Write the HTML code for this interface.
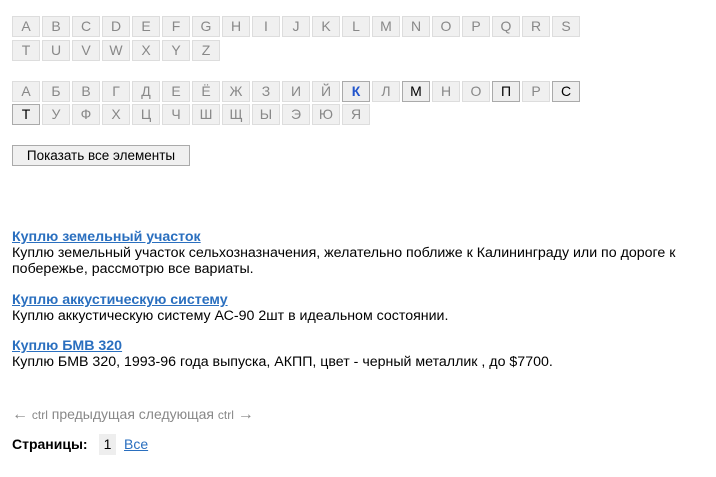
<!DOCTYPE html>
<html><head><meta charset="utf-8"><style>
body{margin:0;background:#fff;font-family:"Liberation Sans",Arial,sans-serif;font-size:14px;color:#000;width:716px;height:477px;position:relative;overflow:hidden}
.row{position:absolute;left:12px;display:flex}
.c{width:26px;height:19px;border:1px solid #ddd;background:#f0f0f0;color:#888;margin-right:2px;text-align:center;line-height:19px;font-size:14px}
.a{border-color:#aaa;background:#eee;color:#000}
.k{color:#2255cc;font-weight:bold}
.btn{position:absolute;left:12px;top:145px;width:176px;height:19px;border:1px solid #aaa;background:#f0f0f0;text-align:center;line-height:19px;font-size:13.5px}
.t{position:absolute;left:12px;line-height:16px;font-size:14.2px}
.t a{color:#2a6fbf;font-weight:bold;text-decoration:underline}
.nav{position:absolute;left:12px;top:406px;color:#888;font-size:14px}
.nav small{font-size:12px}
.nav b{font-weight:normal;font-size:16px}
.pg{position:absolute;left:12px;top:434px;font-weight:bold;line-height:20px}
.one{position:absolute;left:99px;top:434px;width:17px;height:21px;background:#eee;text-align:center;line-height:20px}
.all{position:absolute;left:124px;top:434px;line-height:20px;color:#2a6fbf;text-decoration:underline}
</style></head><body>
<div class="row" style="top:16px"><div class="c">A</div><div class="c">B</div><div class="c">C</div><div class="c">D</div><div class="c">E</div><div class="c">F</div><div class="c">G</div><div class="c">H</div><div class="c">I</div><div class="c">J</div><div class="c">K</div><div class="c">L</div><div class="c">M</div><div class="c">N</div><div class="c">O</div><div class="c">P</div><div class="c">Q</div><div class="c">R</div><div class="c">S</div></div>
<div class="row" style="top:40px"><div class="c">T</div><div class="c">U</div><div class="c">V</div><div class="c">W</div><div class="c">X</div><div class="c">Y</div><div class="c">Z</div></div>
<div class="row" style="top:81px"><div class="c">А</div><div class="c">Б</div><div class="c">В</div><div class="c">Г</div><div class="c">Д</div><div class="c">Е</div><div class="c">Ё</div><div class="c">Ж</div><div class="c">З</div><div class="c">И</div><div class="c">Й</div><div class="c a k">К</div><div class="c">Л</div><div class="c a">М</div><div class="c">Н</div><div class="c">О</div><div class="c a">П</div><div class="c">Р</div><div class="c a">С</div></div>
<div class="row" style="top:104px"><div class="c a">Т</div><div class="c">У</div><div class="c">Ф</div><div class="c">Х</div><div class="c">Ц</div><div class="c">Ч</div><div class="c">Ш</div><div class="c">Щ</div><div class="c">Ы</div><div class="c">Э</div><div class="c">Ю</div><div class="c">Я</div></div>
<div class="btn">Показать все элементы</div>
<div class="t" style="top:229px"><a>Куплю земельный участок</a><br>Куплю земельный участок сельхозназначения, желательно поближе к Калининграду или по дороге к<br>побережье, рассмотрю все вариаты.</div>
<div class="t" style="top:292px"><a>Куплю аккустическую систему</a><br>Куплю аккустическую систему АС-90 2шт в идеальном состоянии.</div>
<div class="t" style="top:338px"><a>Куплю БМВ 320</a><br>Куплю БМВ 320, 1993-96 года выпуска, АКПП, цвет - черный металлик , до $7700.</div>
<div class="nav"><b>←</b> <small>ctrl</small> предыдущая следующая <small>ctrl</small> <b>→</b></div>
<div class="pg">Страницы:</div>
<div class="one">1</div>
<div class="all">Все</div>
</body></html>
